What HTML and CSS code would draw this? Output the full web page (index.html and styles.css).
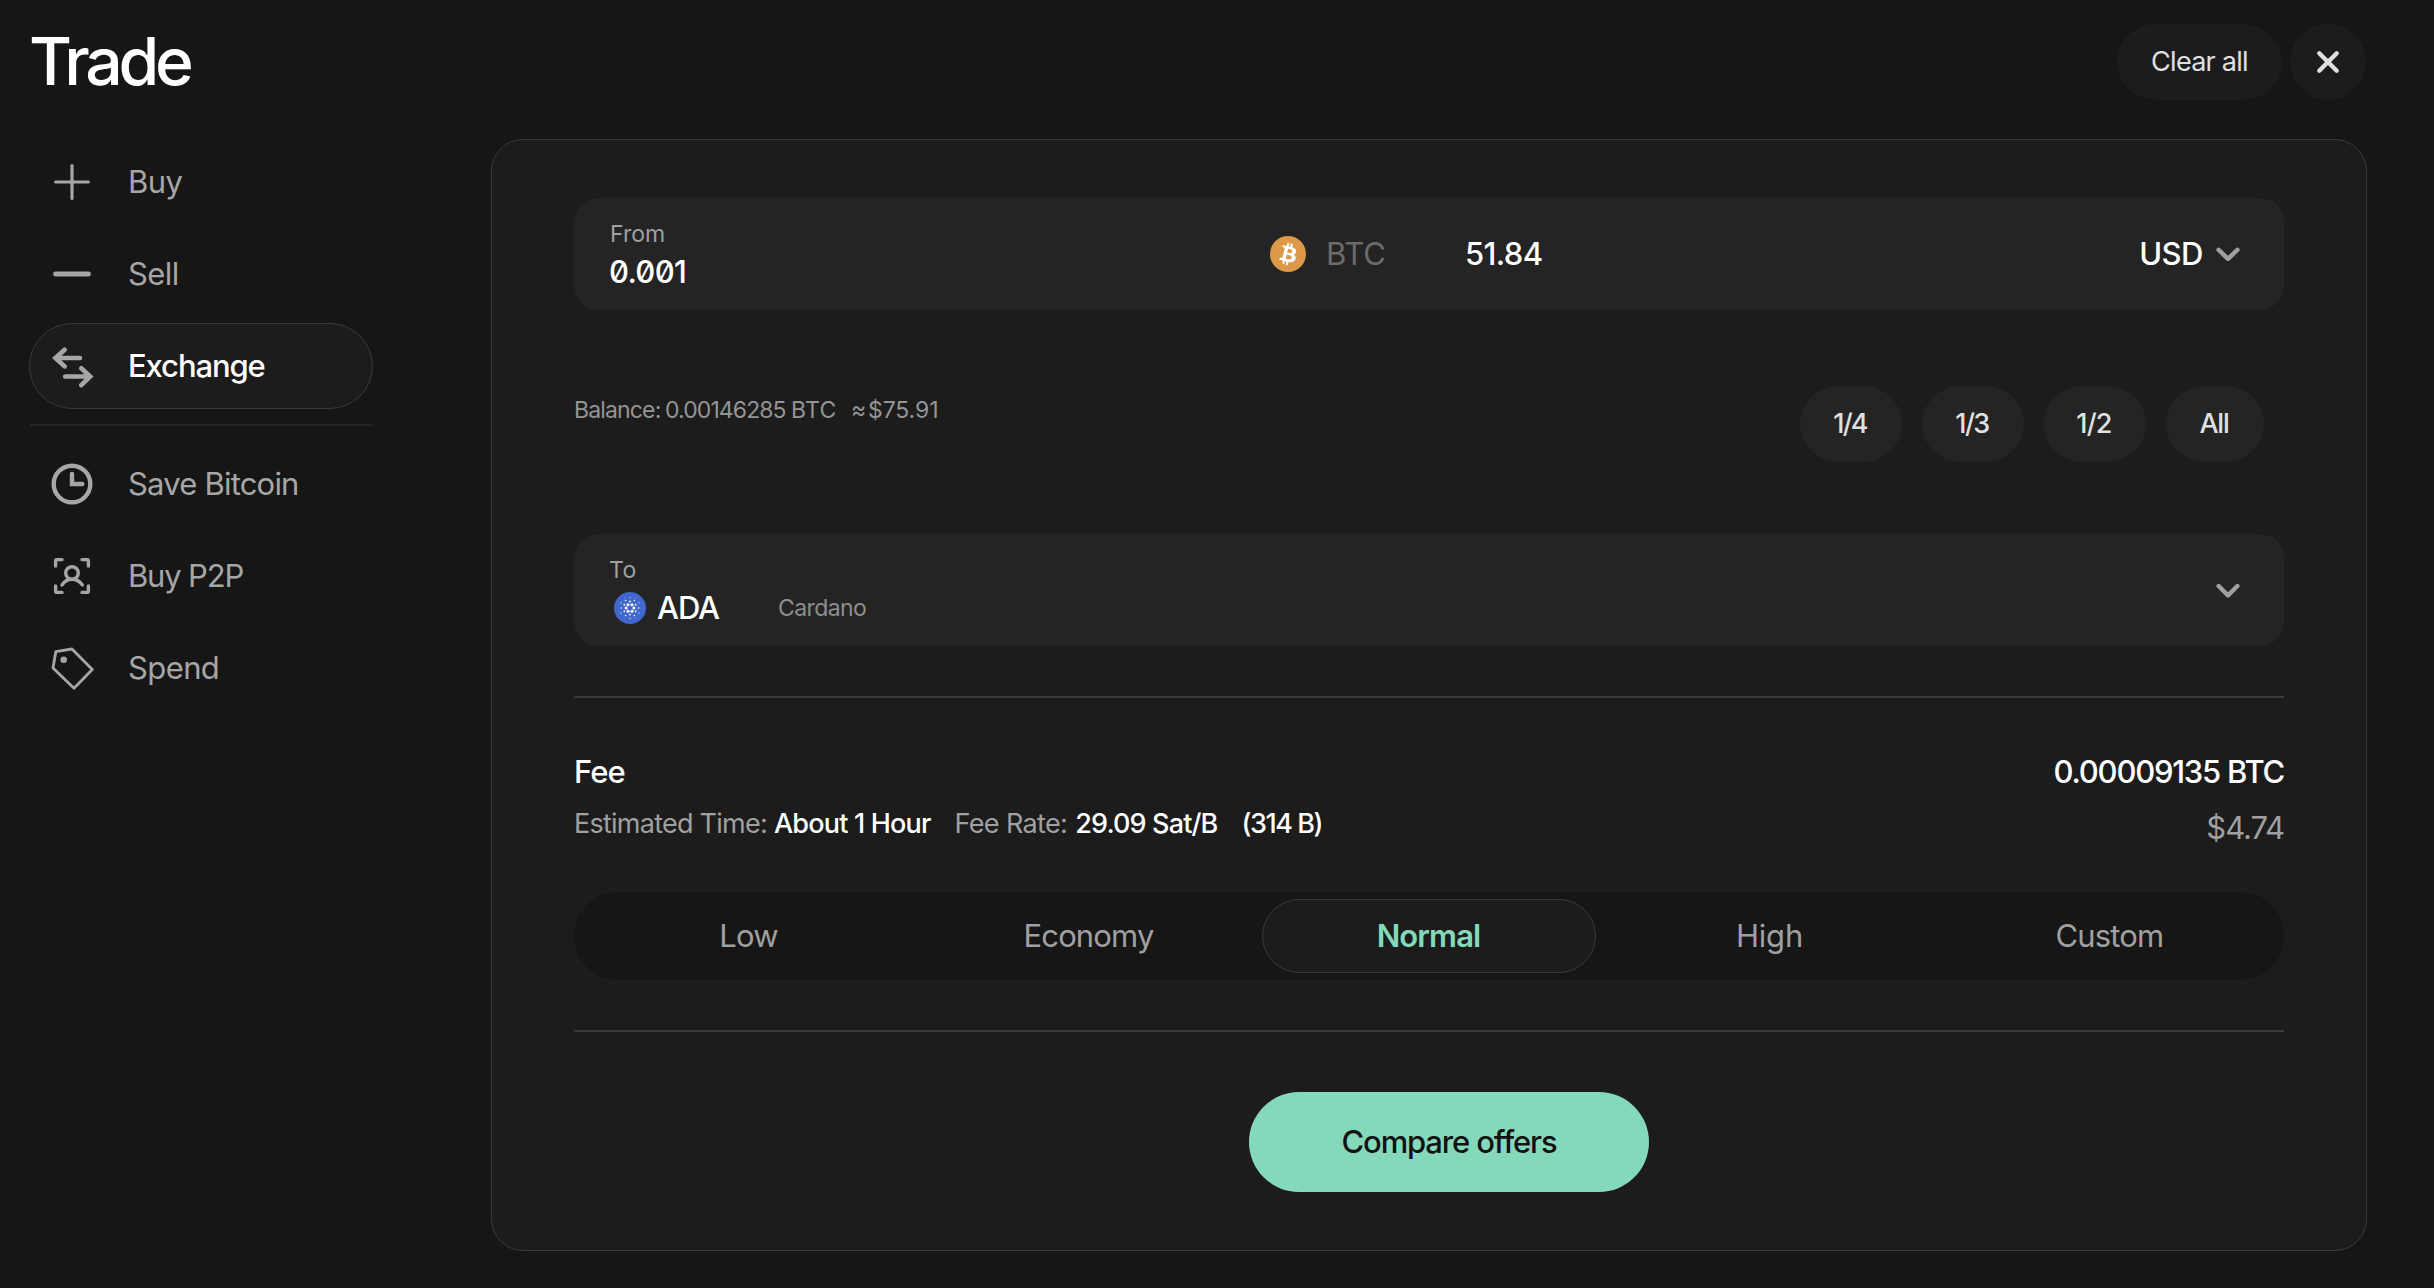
FILE: index.html
```html
<!DOCTYPE html>
<html lang="en">
<head>
<meta charset="utf-8">
<title>Trade</title>
<link rel="stylesheet" href="styles.css">
</head>
<body>
<header class="header">
  <h1 class="title">Trade</h1>
  <div class="header-actions">
    <button class="round-btn clear-btn">Clear all</button>
    <button class="round-btn close-btn" aria-label="Close">
      <svg width="26" height="26" viewBox="0 0 26 26"><path d="M4.3 4.3 21.7 21.7M21.7 4.3 4.3 21.7"/></svg>
    </button>
  </div>
</header>
<div class="layout">
  <nav class="nav">
    <a class="nav-item">
      <svg class="icon" viewBox="0 0 44 44" stroke-width="3.2"><path d="M5.6 22H38.4M22 5.6V38.4"/></svg>
      <span class="nav-tight">Buy</span>
    </a>
    <a class="nav-item">
      <svg class="icon" viewBox="0 0 44 44" stroke-width="4.8"><path d="M5.5 22H38.5"/></svg>
      <span class="nav-tight">Sell</span>
    </a>
    <a class="nav-item active">
      <svg class="icon" viewBox="0 0 44 44" stroke-width="4.6"><path d="M30 14H5.4M14.6 5.7 5.4 14l9.2 8.4M15.2 32.5H40M31.3 24.3 40.2 32.5l-8.9 8.6"/></svg>
      <span class="nav-exchange">Exchange</span>
    </a>
    <hr class="nav-rule">
    <a class="nav-item">
      <svg class="icon" viewBox="0 0 44 44" stroke-width="4.4"><circle cx="22" cy="22" r="18.3"/><path d="M22 12V22H32.3"/></svg>
      <span>Save Bitcoin</span>
    </a>
    <a class="nav-item">
      <svg class="icon" viewBox="0 0 44 44" stroke-width="3.4"><path d="M5.6 12V7Q5.6 5.6 7 5.6h5M32 5.6h5q1.4 0 1.4 1.4v5M38.4 32v5q0 1.4-1.4 1.4h-5M12 38.4H7Q5.6 38.4 5.6 37V32"/><circle cx="22" cy="19" r="6.3"/><path d="M12 31Q16 25.3 22 25.3T32.400 31"/></svg>
      <span class="nav-p2p">Buy P2P</span>
    </a>
    <a class="nav-item">
      <svg class="icon" viewBox="0 0 44 44" stroke-width="2.8" stroke-linejoin="round"><path d="M5.8 5.700 22 3 42.300 23.600 24 42.300 3 22Z"/><circle class="dot" cx="13.700" cy="13.700" r="3.300"/></svg>
      <span class="nav-spend">Spend</span>
    </a>
  </nav>

  <main class="card">
    <section class="field">
      <div class="amount">
        <div class="label from-label">From</div>
        <div class="value amount-value">0.001</div>
      </div>
      <svg class="coin" width="36" height="36" viewBox="0 0 32 32"><circle cx="16" cy="16" r="16" fill="#dd994a"/><path fill="#fff" d="M23.189 14.02c.314-2.096-1.283-3.223-3.465-3.975l.708-2.84-1.728-.43-.69 2.765c-.454-.114-.92-.22-1.385-.326l.695-2.783L15.596 6l-.708 2.839c-.376-.086-.746-.17-1.104-.26l.002-.009-2.384-.595-.46 1.846s1.283.294 1.256.312c.7.175.826.638.805 1.006l-.806 3.235c.048.012.11.03.18.057l-.183-.045-1.13 4.532c-.086.212-.303.531-.793.41.018.025-1.256-.313-1.256-.313l-.858 1.978 2.25.561c.418.105.828.215 1.231.318l-.715 2.872 1.727.43.708-2.84c.472.127.93.245 1.378.357l-.706 2.828 1.728.43.715-2.866c2.948.558 5.164.333 6.097-2.333.752-2.146-.037-3.385-1.588-4.192 1.13-.26 1.98-1.003 2.207-2.538zm-3.95 5.538c-.533 2.147-4.148.986-5.32.695l.95-3.805c1.172.293 4.929.872 4.37 3.11zm.535-5.569c-.487 1.953-3.495.96-4.47.717l.86-3.45c.975.243 4.118.696 3.61 2.733z"/></svg>
      <div class="ticker">BTC</div>
      <div class="value fiat-value">51.84</div>
      <div class="value currency">USD</div>
      <svg class="chevron" width="24" height="16" viewBox="0 0 24 16"><path d="M2.600 3.800 12 12.800 21.400 3.800"/></svg>
    </section>

    <section class="balance-row">
      <div class="balance">
        <span class="balance-label">Balance:</span>
        <span class="balance-amount">0.00146285</span>
        <span class="balance-unit">BTC</span>
        <span class="balance-approx">≈</span>
        <span class="balance-fiat">$75.91</span>
      </div>
      <div class="fractions">
        <button class="pill quarter">1/4</button>
        <button class="pill third">1/3</button>
        <button class="pill half">1/2</button>
        <button class="pill all">All</button>
      </div>
    </section>

    <section class="field">
      <div class="target">
        <div class="label to-label">To</div>
        <div class="target-line">
          <svg class="ada" width="32" height="32" viewBox="0 0 32 32"><circle cx="16" cy="16" r="16" fill="#4167cc"/>
            <g fill="#fff">
              <circle cx="12.100" cy="16" r="1.500"/><circle cx="19.900" cy="16" r="1.500"/><circle cx="14" cy="12.700" r="1.500"/><circle cx="18" cy="12.700" r="1.500"/><circle cx="14" cy="19.300" r="1.500"/><circle cx="18" cy="19.300" r="1.500"/>
              <circle cx="16" cy="9.400" r=".9"/><circle cx="16" cy="22.600" r=".9"/><circle cx="10.300" cy="12.700" r=".9"/><circle cx="21.700" cy="12.700" r=".9"/><circle cx="10.300" cy="19.300" r=".9"/><circle cx="21.700" cy="19.300" r=".9"/>
              <circle cx="11.600" cy="8.400" r=".75"/><circle cx="20.400" cy="8.400" r=".75"/><circle cx="7.300" cy="16" r=".75"/><circle cx="24.700" cy="16" r=".75"/><circle cx="11.600" cy="23.600" r=".75"/><circle cx="20.400" cy="23.600" r=".75"/>
              <circle cx="16" cy="5.600" r=".6"/><circle cx="16" cy="26.400" r=".6"/><circle cx="7" cy="10.800" r=".6"/><circle cx="25" cy="10.800" r=".6"/><circle cx="7" cy="21.200" r=".6"/><circle cx="25" cy="21.200" r=".6"/>
              <circle cx="10.300" cy="6" r=".35"/><circle cx="21.700" cy="6" r=".35"/><circle cx="4.500" cy="16" r=".35"/><circle cx="27.500" cy="16" r=".35"/><circle cx="10.300" cy="26" r=".35"/><circle cx="21.700" cy="26" r=".35"/>
            </g>
          </svg>
          <span class="value asset">ADA</span>
          <span class="asset-name">Cardano</span>
        </div>
      </div>
      <svg class="chevron" width="24" height="16" viewBox="0 0 24 16"><path d="M2.600 4 12 13.400 21.400 4"/></svg>
    </section>

    <hr class="rule">

    <section class="fee">
      <div>
        <div class="value fee-title">Fee</div>
        <div class="fee-details">
          <span class="muted time-label">Estimated Time:</span>
          <span class="time-value">About 1 Hour</span>
          <span class="muted rate-label">Fee Rate:</span>
          <span class="rate-value">29.09 Sat/B</span>
          <span class="size-value">(314 B)</span>
        </div>
      </div>
      <div class="fee-amounts">
        <div class="value fee-btc">0.00009135 BTC</div>
        <div class="fee-usd">$4.74</div>
      </div>
    </section>

    <div class="segments">
      <button class="segment">Low</button>
      <button class="segment">Economy</button>
      <button class="segment selected">Normal</button>
      <button class="segment high">High</button>
      <button class="segment custom">Custom</button>
    </div>

    <hr class="rule">

    <div class="submit-row">
      <button class="submit">Compare offers</button>
    </div>
  </main>
</div>
</body>
</html>
```
FILE: styles.css
```css
* {
  box-sizing: border-box;
}

body {
  margin: 0;
  height: 1288px;
  padding: 24px 67px 0 29px;
  background: #161616;
  color: #fff;
  font-family: Inter, "Liberation Sans", sans-serif;
  font-size: 31px;
  white-space: nowrap;
  overflow: hidden;
}

button {
  border: 0;
  padding: 0;
  font: inherit;
  color: inherit;
}

hr {
  border: 0;
  margin: 0;
  height: 2px;
}

svg {
  display: block;
  flex: none;
}

/* Header */
.header {
  display: flex;
  justify-content: space-between;
  height: 76px;
}

.title {
  margin: 0;
  font-size: 66px;
  font-weight: 500;
  line-height: 74px;
  letter-spacing: -4.2px;
}

.header-actions {
  display: flex;
  gap: 8px;
  margin-right: 1px;
}

.round-btn {
  display: flex;
  align-items: center;
  justify-content: center;
  height: 76px;
  border-radius: 38px;
  background: #1c1c1c;
  color: #e0e0e0;
}

.clear-btn {
  width: 165px;
  padding-bottom: 1px;
  font-size: 27px;
  letter-spacing: -0.74px;
}

.close-btn {
  width: 76px;
}

.close-btn path {
  stroke: #e0e0e0;
  stroke-width: 4.4;
  stroke-linecap: round;
}

/* Page grid */
.layout {
  display: grid;
  grid-template-columns: 344px 1fr;
  column-gap: 118px;
  margin-top: 39px;
}

.nav {
  display: flex;
  flex-direction: column;
  gap: 6px;
}

.nav-item {
  display: flex;
  align-items: center;
  gap: 34px;
  height: 86px;
  padding-left: 20px;
  border: 1px solid transparent;
  border-radius: 43px;
  color: #a6a6a6;
  letter-spacing: -0.8px;
}

.nav-item span {
  padding-bottom: 2px;
}

.nav-item.active {
  background: #1c1c1c;
  border-color: #3a3a3a;
  color: #fff;
  font-weight: 500;
}

.nav-tight {
  letter-spacing: -0.6px;
}

.nav-exchange {
  letter-spacing: -1.1px;
}

.nav-p2p {
  letter-spacing: -1.16px;
}

.nav-spend {
  letter-spacing: -0.6px;
}

.icon {
  width: 44px;
  height: 44px;
  fill: none;
  stroke: #a6a6a6;
  stroke-linecap: round;
}

.icon .dot {
  fill: #a6a6a6;
  stroke: none;
}

.nav-rule {
  margin: 9px 1px;
  background: #262626;
}

/* Card */
.card {
  width: 1876px;
  height: 1112px;
  padding: 58px 82px 0;
  border: 1px solid #3a3a3a;
  border-radius: 32px;
  background: #1c1c1c;
}

.field {
  display: flex;
  align-items: center;
  height: 112px;
  padding: 0 44px 0 35px;
  border-radius: 24px;
  background: #242424;
}

.value {
  font-weight: 500;
}

.amount {
  width: 661px;
  padding-bottom: 2px;
}

.label {
  font-size: 23px;
  line-height: 38px;
  color: #a0a0a0;
}

.from-label {
  margin-left: 1px;
}

.to-label {
  letter-spacing: 0.4px;
}

.amount-value {
  line-height: 38px;
  letter-spacing: -0.7px;
  font-feature-settings: "zero";
}

.ticker {
  width: 139px;
  margin-left: 20px;
  padding-bottom: 2px;
  letter-spacing: -0.2px;
  color: #6b6b6b;
}

.fiat-value {
  flex: 1;
  padding-bottom: 2px;
  letter-spacing: -0.6px;
}

.currency {
  margin-right: 13px;
  padding-bottom: 2px;
  letter-spacing: -0.5px;
}

.chevron path {
  fill: none;
  stroke: #a0a0a0;
  stroke-width: 4.4;
  stroke-linecap: round;
  stroke-linejoin: round;
}

.balance-row {
  display: flex;
  justify-content: space-between;
  margin: 76px 0 72px;
}

.balance {
  display: flex;
  font-size: 23px;
  line-height: 48px;
  color: #949494;
}

.balance-label {
  width: 91px;
  letter-spacing: -0.85px;
}

.balance-amount {
  width: 126px;
  letter-spacing: -0.9px;
}

.balance-unit {
  width: 60px;
  letter-spacing: 0.3px;
}

.balance-approx {
  width: 17px;
}

.balance-fiat {
  letter-spacing: -0.1px;
}

.fractions {
  display: flex;
  gap: 20px;
  margin-right: 20px;
}

.pill {
  width: 102px;
  height: 76px;
  padding: 0 2px 2px 0;
  border-radius: 38px;
  background: #242424;
  color: #e0e0e0;
  font-size: 27px;
  font-weight: 500;
}

.pill.quarter {
  letter-spacing: -1.85px;
}

.pill.third {
  letter-spacing: -1.6px;
}

.pill.half {
  letter-spacing: -0.85px;
}

.pill.all {
  width: 98px;
  letter-spacing: -1.2px;
}

.target {
  flex: 1;
  padding-bottom: 2px;
}

.target-line {
  display: flex;
  align-items: center;
  height: 38px;
}

.ada {
  margin: 0 11px 0 5px;
}

.asset {
  width: 121px;
  padding-bottom: 2px;
  letter-spacing: -1.1px;
}

.asset-name {
  font-size: 23px;
  letter-spacing: -0.6px;
  color: #8e8e8e;
}

.rule {
  margin: 50px 0 0;
  background: #3a3a3a;
}

/* Fee summary */
.fee {
  display: flex;
  justify-content: space-between;
  margin: 49px 0 33px;
  line-height: 50px;
}

.fee-title {
  letter-spacing: -0.9px;
}

.fee-details {
  display: flex;
  font-size: 27px;
  font-weight: 500;
  line-height: 54px;
}

.muted {
  font-weight: 400;
  color: #a0a0a0;
}

.time-label {
  margin-right: 7px;
  letter-spacing: -0.75px;
}

.time-value {
  margin-right: 24px;
  letter-spacing: -0.81px;
}

.rate-label {
  margin-right: 8px;
  letter-spacing: -0.65px;
}

.rate-value {
  margin-right: 24px;
  letter-spacing: -0.85px;
}

.size-value {
  letter-spacing: -1.46px;
}

.fee-amounts {
  text-align: right;
}

.fee-btc {
  letter-spacing: -1.23px;
}

.fee-usd {
  line-height: 62px;
  letter-spacing: -1.1px;
  color: #a0a0a0;
}

.segments {
  display: grid;
  grid-template-columns: repeat(5, 1fr);
  gap: 6px;
  height: 88px;
  padding: 7px 8px;
  border-radius: 44px;
  background: #161616;
}

.segment {
  padding: 0 1px 2px 0;
  border: 1px solid transparent;
  border-radius: 37px;
  background: none;
  color: #a0a0a0;
  letter-spacing: -0.85px;
}

.segment.high {
  padding: 0 0 2px 1px;
  letter-spacing: -0.2px;
}

.segment.custom {
  padding: 0 0 2px 1px;
}

.segment.selected {
  border-color: #3a3a3a;
  background: #1c1c1c;
  color: #84d9ba;
  font-weight: 600;
}

.submit-row {
  display: flex;
  justify-content: center;
  padding: 60px 0 0 40px;
}

.submit {
  width: 400px;
  height: 100px;
  padding-bottom: 1px;
  border-radius: 50px;
  background: #84d9ba;
  color: #121212;
  font-weight: 500;
  letter-spacing: -1.14px;
}
```
